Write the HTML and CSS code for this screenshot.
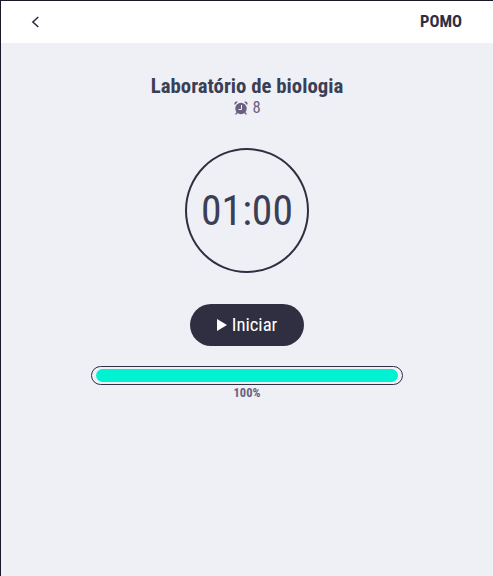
FILE: index.html
```html
<!DOCTYPE html>
<html lang="pt-BR">
<head>
<meta charset="utf-8">
<title>Pomo</title>
<link rel="stylesheet" href="styles.css">
</head>
<body>
<header class="topbar">
  <svg class="back" viewBox="0 0 8 12"><path d="M6.8 1L1.4 6l5.4 5"/></svg>
  <span class="brand">POMO</span>
</header>
<main class="timer">
  <h1 class="title">Laboratório de biologia</h1>
  <div class="count">
    <svg class="alarm" viewBox="0 0 14 14"><circle class="solid" cx="7" cy="7.5" r="5.700"/><path class="solid" d="M3.200 10.500L1 12.900l1 .9 2.500-2.200zM10.800 10.500l2.200 2.400-1 .9-2.500-2.200zM.9 4C-.4 1.800 1.300-.2 3.800.7zM13.100 4C14.400 1.800 12.700-.2 10.200.7z"/><path class="hands" d="M7.500 4v4.500H4.500"/></svg>
    <span>8</span>
  </div>
  <div class="clock"><span>01:00</span></div>
  <button class="start"><svg class="play" viewBox="0 0 10 12"><path d="M0 0l10 6-10 6z"/></svg><span>Iniciar</span></button>
  <div class="progress"><div class="fill"></div></div>
  <div class="percent">100%</div>
</main>
</body>
</html>
```
FILE: styles.css
```css
* { box-sizing: border-box; }
body {
  margin: 0;
  height: 576px;
  border: solid #1d1829;
  border-width: 1px 0 0 1px;
  background: #eff0f6;
  color: #3b3f56;
  font-family: "Roboto Condensed", Roboto, sans-serif;
  font-stretch: 75%;
}
.topbar {
  display: flex;
  align-items: center;
  justify-content: space-between;
  height: 42px;
  padding: 0 31px 0 30px;
  background: #fff;
  color: #302f42;
}
.back { width: 9px; height: 12px; fill: none; stroke: #302f42; stroke-width: 1.6; }
.brand { font-size: 16.6px; font-weight: 700; line-height: 20px; }
.timer { display: flex; flex-direction: column; align-items: center; padding-top: 31px; }
.title { margin: 0; font-size: 20.8px; line-height: 24px; font-weight: 700; white-space: nowrap; }
.count { display: flex; align-items: center; gap: 4px; height: 18px; padding: 2px 0 0 1px; font-size: 16.6px; line-height: 18px; color: #6a5f80; }
.alarm { width: 14px; height: 14px; }
.solid { fill: #6a5f80; }
.hands { fill: none; stroke: #eff0f6; stroke-width: 1; }
.clock {
  display: flex;
  align-items: center;
  justify-content: center;
  width: 124px;
  height: 125px;
  margin-top: 32px;
  border: 2px solid #302f42;
  border-radius: 50%;
  font-size: 41.6px;
  line-height: 50px;
}
.start {
  display: flex;
  align-items: center;
  justify-content: center;
  gap: 5px;
  width: 114px;
  height: 42px;
  margin-top: 31px;
  padding: 0;
  border: 0;
  border-radius: 21px;
  background: #302f42;
  color: #fff;
  font: inherit;
  font-size: 18.7px;
}
.play { width: 10px; height: 12px; fill: #fff; }
.progress { width: 312px; height: 19px; margin-top: 20px; padding: 2px 4px; border: 1px solid #302f42; border-radius: 10px; }
.fill { height: 13px; border-radius: 7px; background: #00f2d3; }
.percent { margin-top: 1px; font-size: 12.5px; line-height: 14px; font-weight: 700; color: #6a5f80; }
```
